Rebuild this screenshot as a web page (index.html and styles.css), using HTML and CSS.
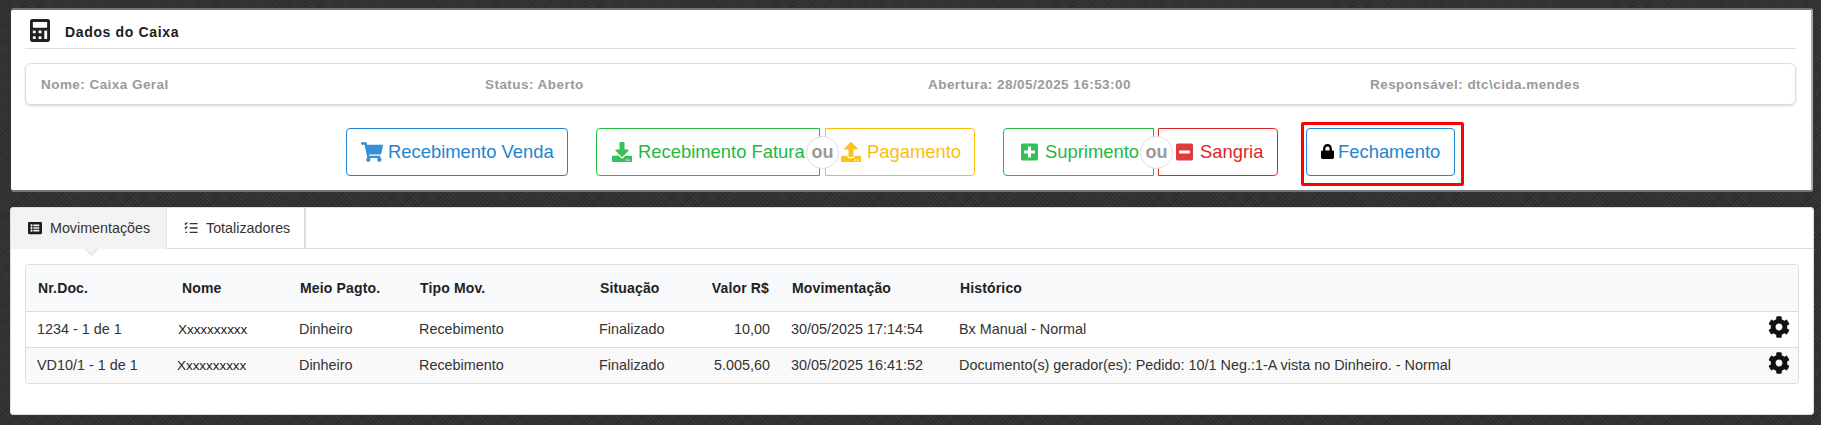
FILE: index.html
```html
<!DOCTYPE html>
<html lang="pt-BR">
<head>
<meta charset="utf-8">
<title>Dados do Caixa</title>
<link rel="stylesheet" href="styles.css">
</head>
<body>
<section class="card card-top">
  <h2 class="title">
    <svg class="title-icon" viewBox="0 0 448 512"><path d="M400 0H48C22.4 0 0 22.4 0 48v416c0 25.6 22.4 48 48 48h352c25.6 0 48-22.4 48-48V48C448 22.4 425.6 0 400 0zM128 435.2c0 6.4-6.4 12.8-12.8 12.8H76.8c-6.4 0-12.8-6.4-12.8-12.8v-38.4c0-6.4 6.4-12.8 12.8-12.8h38.4c6.4 0 12.8 6.4 12.8 12.8v38.4zm0-128c0 6.4-6.4 12.8-12.8 12.8H76.8c-6.4 0-12.8-6.4-12.8-12.8v-38.4c0-6.4 6.4-12.8 12.8-12.8h38.4c6.4 0 12.8 6.4 12.8 12.8v38.4zm128 128c0 6.4-6.4 12.8-12.8 12.8h-38.4c-6.4 0-12.8-6.4-12.8-12.8v-38.4c0-6.4 6.4-12.8 12.8-12.8h38.4c6.4 0 12.8 6.4 12.8 12.8v38.4zm0-128c0 6.4-6.4 12.8-12.8 12.8h-38.4c-6.4 0-12.8-6.4-12.8-12.8v-38.4c0-6.4 6.4-12.8 12.8-12.8h38.4c6.4 0 12.8 6.4 12.8 12.8v38.4zm128 128c0 6.4-6.4 12.8-12.8 12.8h-38.4c-6.4 0-12.8-6.4-12.8-12.8V268.800c0-6.4 6.4-12.8 12.8-12.8h38.4c6.4 0 12.8 6.4 12.8 12.8v166.4zm0-256c0 6.4-6.4 12.8-12.8 12.8H76.8c-6.4 0-12.8-6.4-12.8-12.8V76.800C64 70.400 70.400 64 76.800 64h294.400c6.400 0 12.800 6.400 12.800 12.800v102.400z"/></svg>
    <span>Dados do Caixa</span>
  </h2>
  <div class="info">
    <span class="info-item">Nome: Caixa Geral</span>
    <span class="info-item">Status: Aberto</span>
    <span class="info-item">Abertura: 28/05/2025 16:53:00</span>
    <span class="info-item">Responsável: dtc\cida.mendes</span>
  </div>
  <div class="actions">
    <button class="btn blue w-venda"><svg class="ico ico-cart" viewBox="0 0 576 512"><path d="M528.12 301.319l47.273-208C578.806 78.301 567.391 64 551.99 64H159.208l-9.166-44.81C147.758 8.021 137.93 0 126.529 0H24C10.745 0 0 10.745 0 24v16c0 13.255 10.745 24 24 24h69.883l70.248 343.435C147.325 417.1 136 435.222 136 456c0 30.928 25.072 56 56 56s56-25.072 56-56c0-15.674-6.447-29.835-16.824-40h209.647C430.447 426.165 424 440.326 424 456c0 30.928 25.072 56 56 56s56-25.072 56-56c0-22.172-12.888-41.332-31.579-50.405l5.517-24.276c3.413-15.018-8.002-29.319-23.403-29.319H218.117l-6.545-32h293.145c11.206 0 20.92-7.754 23.403-18.681z"/></svg>Recebimento Venda</button>
    <div class="pair pair-a">
      <button class="btn green left w-fatura"><svg class="ico" viewBox="0 0 512 512"><path d="M216 0h80c13.3 0 24 10.7 24 24v168h87.7c17.8 0 26.7 21.5 14.1 34.1L269.7 378.3c-7.5 7.5-19.8 7.5-27.3 0L90.1 226.1c-12.6-12.6-3.7-34.1 14.1-34.1H192V24c0-13.3 10.7-24 24-24zm296 376v112c0 13.3-10.7 24-24 24H24c-13.3 0-24-10.7-24-24V376c0-13.3 10.7-24 24-24h146.7l49 49c20.1 20.1 52.5 20.1 72.6 0l49-49H488c13.3 0 24 10.7 24 24zm-124 88c0-11-9-20-20-20s-20 9-20 20 9 20 20 20 20-9 20-20zm64 0c0-11-9-20-20-20s-20 9-20 20 9 20 20 20 20-9 20-20z"/></svg>Recebimento Fatura</button>
      <span class="or">ou</span>
      <button class="btn yellow right w-pag"><svg class="ico" viewBox="0 0 512 512"><path d="M296 384h-80c-13.3 0-24-10.7-24-24V192h-87.7c-17.8 0-26.7-21.5-14.1-34.1L242.3 5.7c7.5-7.5 19.8-7.5 27.3 0l152.2 152.2c12.6 12.6 3.7 34.1-14.1 34.1H320v168c0 13.3-10.7 24-24 24zm216-8v112c0 13.3-10.7 24-24 24H24c-13.3 0-24-10.7-24-24V376c0-13.3 10.7-24 24-24h136v8c0 30.9 25.1 56 56 56h80c30.9 0 56-25.1 56-56v-8h136c13.3 0 24 10.7 24 24zm-124 88c0-11-9-20-20-20s-20 9-20 20 9 20 20 20 20-9 20-20zm64 0c0-11-9-20-20-20s-20 9-20 20 9 20 20 20 20-9 20-20z"/></svg>Pagamento</button>
    </div>
    <div class="pair pair-b">
      <button class="btn green left w-sup"><svg class="ico ico-sq" viewBox="0 0 448 512"><path d="M400 32H48C21.5 32 0 53.5 0 80v352c0 26.5 21.5 48 48 48h352c26.5 0 48-21.5 48-48V80c0-26.5-21.5-48-48-48zm-32 252c0 6.6-5.4 12-12 12h-92v92c0 6.6-5.4 12-12 12h-56c-6.6 0-12-5.4-12-12v-92H92c-6.6 0-12-5.4-12-12v-56c0-6.6 5.4-12 12-12h92v-92c0-6.6 5.4-12 12-12h56c6.6 0 12 5.4 12 12v92h92c6.6 0 12 5.4 12 12v56z"/></svg>Suprimento</button>
      <span class="or">ou</span>
      <button class="btn red right w-san"><svg class="ico ico-sq" viewBox="0 0 448 512"><path d="M400 32H48C21.5 32 0 53.5 0 80v352c0 26.5 21.5 48 48 48h352c26.5 0 48-21.5 48-48V80c0-26.5-21.5-48-48-48zM92 296c-6.6 0-12-5.400-12-12v-56c0-6.600 5.400-12 12-12h264c6.600 0 12 5.400 12 12v56c0 6.600-5.400 12-12 12H92z"/></svg>Sangria</button>
    </div>
    <div class="highlight">
      <button class="btn blue w-fec"><svg class="ico ico-lock" viewBox="0 0 448 512"><path d="M400 224h-24v-72C376 68.200 307.800 0 224 0S72 68.200 72 152v72H48c-26.500 0-48 21.500-48 48v192c0 26.500 21.500 48 48 48h352c26.500 0 48-21.500 48-48V272c0-26.500-21.500-48-48-48zm-104 0H152v-72c0-39.700 32.300-72 72-72s72 32.300 72 72v72z"/></svg>Fechamento</button>
    </div>
  </div>
</section>

<section class="card card-bottom">
  <nav class="tabs">
    <a class="tab active tab-mov"><svg class="tab-icon" viewBox="0 0 512 512"><path d="M464 480H48c-26.510 0-48-21.490-48-48V80c0-26.510 21.490-48 48-48h416c26.510 0 48 21.490 48 48v352c0 26.510-21.490 48-48 48zM128 120c-22.091 0-40 17.909-40 40s17.909 40 40 40 40-17.909 40-40-17.909-40-40-40zm0 96c-22.091 0-40 17.909-40 40s17.909 40 40 40 40-17.909 40-40-17.909-40-40-40zm0 96c-22.091 0-40 17.909-40 40s17.909 40 40 40 40-17.909 40-40-17.909-40-40-40zm288-136v-32c0-6.627-5.373-12-12-12H204c-6.627 0-12 5.373-12 12v32c0 6.627 5.373 12 12 12h200c6.627 0 12-5.373 12-12zm0 96v-32c0-6.627-5.373-12-12-12H204c-6.627 0-12 5.373-12 12v32c0 6.627 5.373 12 12 12h200c6.627 0 12-5.373 12-12zm0 96v-32c0-6.627-5.373-12-12-12H204c-6.627 0-12 5.373-12 12v32c0 6.627 5.373 12 12 12h200c6.627 0 12-5.373 12-12z"/></svg>Movimentações</a>
    <a class="tab tab-tot"><svg class="tab-icon" viewBox="0 0 16 16"><path class="tab-stroke" d="M1 2.800l1 1 1.800-2.200M1 7.300l1 1 1.800-2.200M1.500 13h2M6.500 3h9M6.500 8h9M6.500 13h9"/></svg>Totalizadores</a>
  </nav>
  <div class="table-wrap">
    <table class="grid">
      <colgroup>
        <col class="c-doc"><col class="c-nome"><col class="c-meio"><col class="c-tipo"><col class="c-sit"><col class="c-val"><col class="c-mov"><col class="c-hist"><col class="c-act">
      </colgroup>
      <thead>
        <tr>
          <th>Nr.Doc.</th><th class="th-nome">Nome</th><th>Meio Pagto.</th><th>Tipo Mov.</th><th>Situação</th><th class="num">Valor R$</th><th>Movimentação</th><th>Histórico</th><th></th>
        </tr>
      </thead>
      <tbody>
        <tr>
          <td>1234 - 1 de 1</td><td class="td-x">Xxxxxxxxxx</td><td>Dinheiro</td><td>Recebimento</td><td>Finalizado</td><td class="num">10,00</td><td>30/05/2025 17:14:54</td><td>Bx Manual - Normal</td>
          <td class="act"><svg class="gear" viewBox="0 0 512 512"><path d="M487.400 315.700l-42.600-24.600c4.300-23.200 4.300-47 0-70.200l42.600-24.600c4.900-2.800 7.100-8.600 5.500-14-11.100-35.600-30-67.800-54.700-94.600-3.800-4.100-10-5.100-14.800-2.300L380.800 110c-17.900-15.400-38.500-27.300-60.800-35.100V25.800c0-5.600-3.900-10.500-9.400-11.700-36.700-8.200-74.300-7.800-109.200 0-5.500 1.200-9.400 6.100-9.400 11.700V75c-22.200 7.900-42.800 19.800-60.800 35.100L88.700 85.500c-4.900-2.800-11-1.900-14.800 2.300-24.700 26.700-43.600 58.900-54.700 94.600-1.700 5.400.6 11.200 5.500 14L67.300 221c-4.300 23.200-4.300 47 0 70.200l-42.600 24.600c-4.900 2.800-7.100 8.600-5.500 14 11.100 35.600 30 67.800 54.700 94.600 3.800 4.100 10 5.100 14.800 2.300l42.600-24.600c17.900 15.400 38.500 27.300 60.800 35.100v49.200c0 5.600 3.900 10.500 9.400 11.700 36.700 8.200 74.300 7.800 109.200 0 5.500-1.200 9.400-6.100 9.400-11.700v-49.200c22.200-7.900 42.800-19.800 60.800-35.100l42.600 24.600c4.900 2.800 11 1.900 14.800-2.300 24.700-26.700 43.600-58.900 54.700-94.600 1.500-5.500-.7-11.300-5.600-14.100zM256 336c-44.100 0-80-35.900-80-80s35.900-80 80-80 80 35.900 80 80-35.900 80-80 80z"/></svg></td>
        </tr>
        <tr class="alt">
          <td>VD10/1 - 1 de 1</td><td class="td-x td-x2">Xxxxxxxxxx</td><td>Dinheiro</td><td>Recebimento</td><td>Finalizado</td><td class="num">5.005,60</td><td>30/05/2025 16:41:52</td><td>Documento(s) gerador(es): Pedido: 10/1 Neg.:1-A vista no Dinheiro. - Normal</td>
          <td class="act"><svg class="gear" viewBox="0 0 512 512"><path d="M487.400 315.700l-42.600-24.600c4.300-23.200 4.300-47 0-70.200l42.600-24.600c4.900-2.800 7.100-8.600 5.500-14-11.100-35.600-30-67.800-54.700-94.600-3.800-4.100-10-5.100-14.800-2.300L380.800 110c-17.900-15.400-38.500-27.300-60.800-35.100V25.800c0-5.600-3.900-10.500-9.400-11.700-36.700-8.200-74.300-7.800-109.200 0-5.500 1.200-9.400 6.100-9.400 11.700V75c-22.200 7.900-42.800 19.800-60.800 35.100L88.700 85.500c-4.900-2.800-11-1.900-14.800 2.300-24.700 26.700-43.600 58.900-54.700 94.600-1.700 5.400.6 11.200 5.500 14L67.300 221c-4.300 23.200-4.300 47 0 70.200l-42.600 24.600c-4.900 2.800-7.100 8.600-5.500 14 11.100 35.600 30 67.800 54.700 94.600 3.800 4.100 10 5.100 14.800 2.300l42.600-24.600c17.900 15.400 38.500 27.300 60.800 35.100v49.200c0 5.600 3.900 10.500 9.400 11.700 36.700 8.200 74.300 7.800 109.200 0 5.500-1.200 9.400-6.100 9.400-11.700v-49.200c22.200-7.900 42.800-19.800 60.800-35.100l42.600 24.600c4.900 2.800 11 1.900 14.800-2.300 24.700-26.700 43.600-58.900 54.700-94.600 1.500-5.500-.7-11.300-5.600-14.100zM256 336c-44.100 0-80-35.900-80-80s35.900-80 80-80 80 35.900 80 80-35.900 80-80 80z"/></svg></td>
        </tr>
      </tbody>
    </table>
  </div>
</section>
</body>
</html>
```
FILE: styles.css
```css
* { box-sizing: border-box; }
html, body { height: 100%; }
body {
  margin: 0;
  padding: 8px 7px 0 10px;
  height: 425px;
  overflow: hidden;
  font-family: "Liberation Sans", Arial, sans-serif;
  color: rgba(0,0,0,.87);
  background-color: #333;
  background-image:
    repeating-linear-gradient(45deg, rgba(255,255,255,.035) 0 1px, transparent 1px 3px),
    repeating-linear-gradient(-45deg, rgba(0,0,0,.18) 0 1px, transparent 1px 3px);
}
.card { background: #fff; border-radius: 3px; }
.card-top {
  margin-left: 1px;
  margin-right: 1px;
  height: 184px;
  padding: 0 15px 0 14px;
  border-top: 2px solid #777;
  border-bottom: 2px solid #777;
  border-right: 2px solid #aaa;
}
.title {
  display: flex;
  align-items: center;
  height: 39px;
  margin: 0;
  padding: 5px 0 0 5px;
  border-bottom: 1px solid #ddd;
  font-size: 14px;
  font-weight: 700;
  letter-spacing: .65px;
  color: #1b1c1d;
}
.title-icon { width: 20px; height: 23px; margin-right: 15px; fill: #222; margin-top: -2px; }
.info {
  display: grid;
  grid-template-columns: 444px 443px 442px 1fr;
  align-items: center;
  height: 42px;
  margin-top: 14px;
  padding: 0 15px;
  border: 1px solid #ddd;
  border-radius: 6px;
  box-shadow: 0 1px 2px rgba(34,36,38,.2);
  font-size: 13.5px;
  font-weight: 700;
  letter-spacing: .45px;
  color: #9a9a9a;
}
.actions {
  display: flex;
  align-items: flex-start;
  margin-top: 23px;
  padding-left: 321px;
}
.btn {
  display: flex;
  align-items: center;
  justify-content: flex-start;
  height: 48px;
  margin: 0;
  padding: 0 0 0 15px;
  background: #fff;
  border: 1px solid currentColor;
  border-radius: 4px;
  font: 18.4px "Liberation Sans", Arial, sans-serif;
  white-space: nowrap;
  cursor: pointer;
}
.blue { color: #2185d0; }
.green { color: #21ba45; }
.yellow { color: #fbbd08; }
.red { color: #db2828; }
.left { border-radius: 4px 0 0 4px; }
.right { border-radius: 0 4px 4px 0; }
.ico { width: 20px; height: 20px; margin-right: 6px; fill: currentColor; opacity: .9; flex: none; }
.ico-cart { width: 22px; margin-right: 5px; margin-left: -1px; }
.ico-sq { width: 17px; margin-right: 7px; }
.ico-lock { width: 13px; height: 15px; margin-right: 4px; margin-top: -2px; fill: #000; opacity: 1; }
.w-venda { width: 222px; }
.w-fatura { width: 224px; }
.w-pag { width: 150px; }
.w-sup { width: 151px; padding-left: 17px; }
.w-san { width: 120px; padding-left: 17px; }
.w-fec { width: 149px; padding-left: 14px; }
.pair { position: relative; display: flex; margin-left: 28px; }
.pair-a { gap: 5px; }
.pair-b { gap: 4px; }
.or {
  position: absolute;
  top: 8px;
  width: 33px;
  height: 33px;
  border: 1px solid #ddd;
  border-radius: 50%;
  background: #fff;
  color: #999;
  font-size: 18px;
  font-weight: 700;
  line-height: 30px;
  text-align: center;
}
.pair-a .or { left: 210px; }
.pair-b .or { left: 137px; }
.highlight {
  margin: -6px 0 0 23px;
  padding: 3px 6px 7px 2px;
  border: 3px solid #f00;
  border-radius: 2px;
}
.card-bottom {
  position: relative;
  height: 208px;
  margin-top: 15px;
  border: 1px solid #ddd;
}
.tabs {
  display: flex;
  height: 41px;
  border-bottom: 1px solid #ddd;
}
.tab {
  position: relative;
  display: flex;
  align-items: center;
  height: 41px;
  padding-bottom: 1px;
  border-right: 1px solid #ddd;
  font-size: 14.3px;
  color: #333;
}
.tab-mov { width: 156px; padding-left: 17px; background: #f3f3f3; border-right-color: #e4e4e4; }
.tab-tot { width: 139px; padding-left: 17px; border-right-width: 2px; }
.tab-mov::after {
  content: "";
  position: absolute;
  left: 76px;
  bottom: -5px;
  width: 8px;
  height: 8px;
  background: #f3f3f3;
  border-right: 1px solid #ddd;
  border-bottom: 1px solid #ddd;
  transform: rotate(45deg);
}
.tab-icon { width: 14px; height: 14px; margin-right: 8px; fill: #1b1c1d; }
.tab-stroke { fill: none; stroke: #333; stroke-width: 1.5; }
.table-wrap {
  margin: 15px 14px 0 14px;
  border: 1px solid #ddd;
  border-radius: 4px;
  overflow: hidden;
}
.grid { width: 100%; border-collapse: collapse; table-layout: fixed; font-size: 14.4px; }
.c-doc { width: 152px; }
.c-nome { width: 111px; }
.c-meio { width: 120px; }
.c-tipo { width: 180px; }
.c-sit { width: 100px; }
.c-val { width: 92px; }
.c-mov { width: 168px; }
.c-act { width: 30px; }
th {
  height: 46px;
  padding: 0 0 0 11px;
  background: #f8f9fa;
  font-weight: 700;
  text-align: left;
  color: #222;
  letter-spacing: .15px;
  font-size: 14px;
}
th:first-child { padding-left: 12px; }
.th-nome { padding-left: 4px; }
td {
  height: 36px;
  padding: 0 0 0 10px;
  border-top: 1px solid #ddd;
  color: #333;
  white-space: nowrap;
}
td:first-child { padding-left: 11px; }
.td-x { padding-left: 0; color: #222; font-size: 13.5px; letter-spacing: -.05px; }
.td-x2 { text-indent: -1px; }
.alt td { background: #f9f9f9; }
th.num { text-align: right; padding-left: 0; padding-right: 12px; }
td.num { text-align: right; padding-left: 0; padding-right: 11px; }
td.act { padding: 0; }
.gear { display: block; width: 22px; height: 22px; fill: #111; margin-top: -5px; }
```
